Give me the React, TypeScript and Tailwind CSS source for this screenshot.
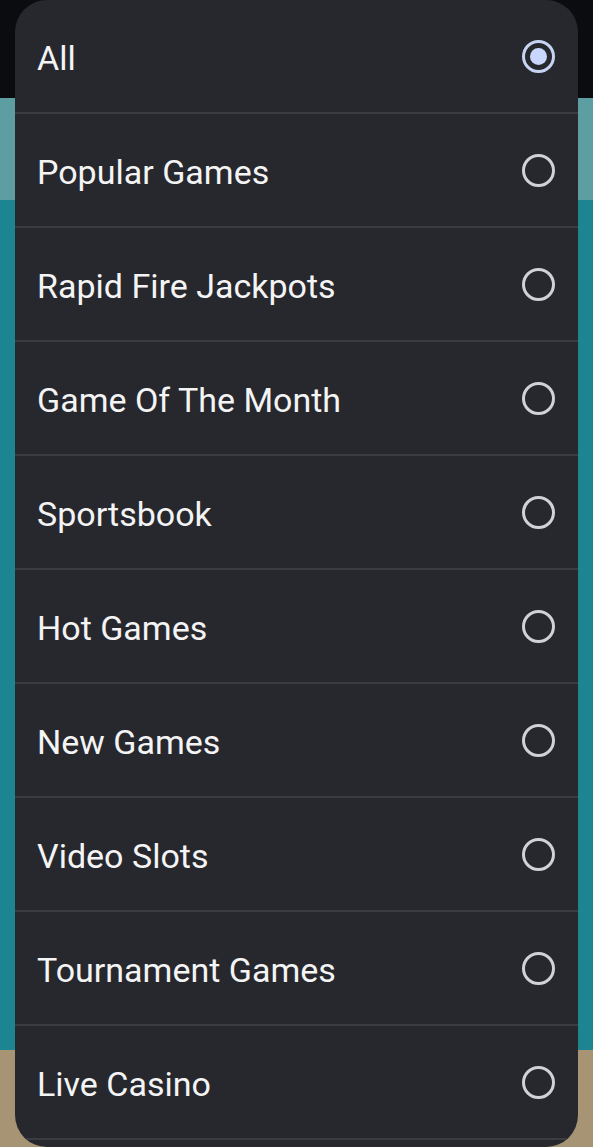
const options = [
  "All",
  "Popular Games",
  "Rapid Fire Jackpots",
  "Game Of The Month",
  "Sportsbook",
  "Hot Games",
  "New Games",
  "Video Slots",
  "Tournament Games",
  "Live Casino",
];

function Radio({ checked }: { checked: boolean }) {
  if (checked) {
    return (
      <span className="flex h-[33px] w-[33px] items-center justify-center rounded-full border-[3px] border-[#c6d3f3]">
        <span className="h-[17px] w-[17px] rounded-full bg-[#c8d7fb]" />
      </span>
    );
  }
  return <span className="block h-[33px] w-[33px] rounded-full border-[3px] border-[#d2d2d6]" />;
}

export default function App() {
  return (
    <div className="relative h-[1147px] w-[593px] overflow-hidden">
      {/* Page behind the sheet */}
      <div className="flex h-full flex-col">
        <div className="h-[98px] bg-[#0a0c10]" />
        <div className="h-[102px] bg-[#5c9ea1]" />
        <div className="flex-1 bg-[#1d8591]" />
        <div className="h-[97px] bg-[#a69475]" />
      </div>

      {/* Category picker */}
      <div
        className="absolute left-[15px] top-0 h-[1147px] w-[563px] overflow-hidden rounded-[32px] bg-[#27282d]"
        style={{ fontFamily: "Roboto, 'Noto Sans', sans-serif" }}
      >
        {options.map((label, i) => (
          <div
            key={label}
            className="flex h-[114px] items-center justify-between border-b-2 border-[#3b3c41] pl-[22px] pr-[23px]"
          >
            <span className="pt-[3px] text-[34px] leading-none text-[#f4f4f5]">{label}</span>
            <Radio checked={i === 0} />
          </div>
        ))}
      </div>
    </div>
  );
}
